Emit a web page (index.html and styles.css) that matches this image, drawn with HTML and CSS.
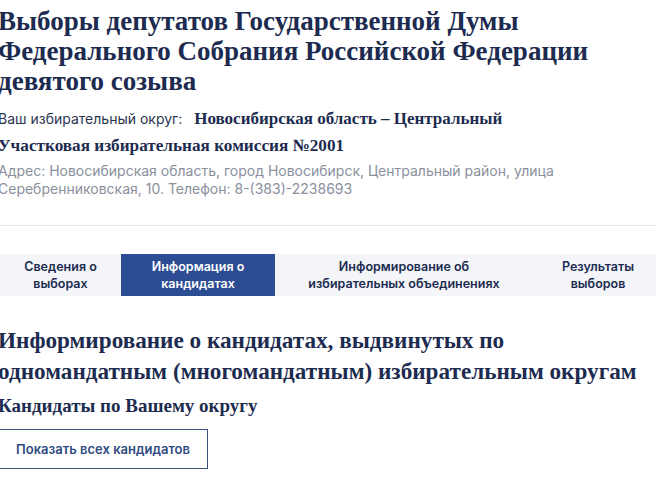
FILE: index.html
```html
<!DOCTYPE html>
<html lang="ru">
<head>
<meta charset="utf-8">
<link rel="stylesheet" href="styles.css">
</head>
<body>
<div class="page">
  <header class="head">
    <h1 class="title">Выборы депутатов Государственной Думы Федерального Собрания Российской Федерации девятого созыва</h1>
    <div class="district">
      <span class="district-label">Ваш избирательный округ:</span>
      <span class="district-value">Новосибирская область – Центральный</span>
    </div>
    <div class="commission">Участковая избирательная комиссия №2001</div>
    <div class="address">Адрес: Новосибирская область, город Новосибирск, Центральный район, улица Серебренниковская, 10. Телефон: 8-(383)-2238693</div>
  </header>
  <hr class="divider">
  <nav class="tabs">
    <div class="tab tab-1">Сведения о<br>выборах</div>
    <div class="tab tab-2 active">Информация о<br>кандидатах</div>
    <div class="tab tab-3">Информирование об<br>избирательных объединениях</div>
    <div class="tab tab-4">Результаты<br>выборов</div>
  </nav>
  <section class="info">
    <h2 class="info-title">Информирование о кандидатах, выдвинутых по одномандатным (многомандатным) избирательным округам</h2>
    <h3 class="info-sub">Кандидаты по Вашему округу</h3>
    <button class="btn">Показать всех кандидатов</button>
  </section>
</div>
</body>
</html>
```

FILE: styles.css
```css
html, body {
  margin: 0;
  padding: 0;
  background: #ffffff;
  overflow: hidden;
}
.page {
  width: 680px;
  margin-left: -2px;
  color: #1c2b4f;
  font-family: Inter, "Noto Sans", sans-serif;
}
.head {
  padding-top: 6px;
}
.title {
  margin: 0;
  font-family: "Liberation Serif", serif;
  font-weight: 700;
  font-size: 27px;
  line-height: 30px;
  width: 620px;
}
.district {
  display: flex;
  align-items: baseline;
  gap: 12px;
  margin-top: 13px;
}
.district-label {
  font-size: 14px;
  color: #2a3550;
}
.district-value {
  font-family: "Liberation Serif", serif;
  font-weight: 700;
  font-size: 17px;
}
.commission {
  margin-top: 7px;
  font-family: "Liberation Serif", serif;
  font-weight: 700;
  font-size: 17.2px;
  line-height: 20px;
}
.address {
  margin-top: 6px;
  font-size: 14px;
  line-height: 18px;
  color: #8a909d;
  width: 570px;
}
.divider {
  margin: 27px 0 0 0;
  border: 0;
  border-top: 1px solid #e6e8ec;
}
.tabs {
  display: flex;
  margin-top: 28px;
  margin-left: 2px;
  background: #f3f5f9;
  height: 42px;
}
.tab {
  display: flex;
  align-items: center;
  justify-content: center;
  text-align: center;
  font-size: 12.5px;
  font-weight: 600;
  line-height: 17px;
  color: #1c2b4f;
  flex: none;
}
.tab-1 { width: 121px; }
.tab-2 { width: 154px; }
.tab-3 { width: 258px; }
.tab-4 { width: 130px; }
.tab.active {
  background: #2c4d93;
  color: #ffffff;
}
.info {
  padding-top: 29px;
}
.info-title {
  margin: 0;
  font-family: "Liberation Serif", serif;
  font-weight: 700;
  font-size: 23.2px;
  line-height: 31px;
  width: 660px;
}
.info-sub {
  margin: 8px 0 0 0;
  font-family: "Liberation Serif", serif;
  font-weight: 700;
  font-size: 19px;
  line-height: 22px;
}
.btn {
  margin-top: 12px;
  width: 210px;
  height: 40px;
  background: #ffffff;
  border: 1px solid #3b4f7d;
  color: #2f4a80;
  font-family: Inter, "Noto Sans", sans-serif;
  font-size: 13px;
  font-weight: 600;
  padding: 0;
}
```
